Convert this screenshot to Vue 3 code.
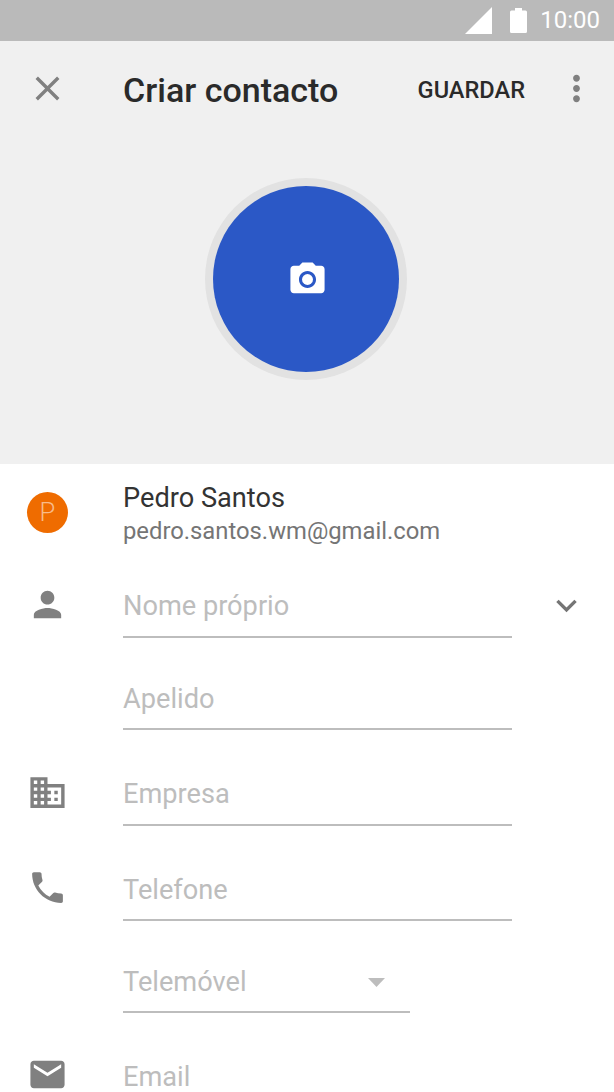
<script setup>
const rows = [
  { id: 'first', label: 'Nome próprio', h: 78, icon: 'M12 12c2.21 0 4-1.79 4-4s-1.79-4-4-4-4 1.79-4 4 1.79 4 4 4zm0 2c-2.67 0-8 1.34-8 4v2h16v-2c0-2.66-5.33-4-8-4z', chevron: true },
  { id: 'last', label: 'Apelido', h: 92 },
  { id: 'org', label: 'Empresa', h: 96, icon: 'M12 7V3H2v18h20V7H12zM6 19H4v-2h2v2zm0-4H4v-2h2v2zm0-4H4V9h2v2zm0-4H4V5h2v2zm4 12H8v-2h2v2zm0-4H8v-2h2v2zm0-4H8V9h2v2zm0-4H8V5h2v2zm10 12h-8v-2h2v-2h-2v-2h2v-2h-2V9h8v10zm-2-8h-2v2h2v-2zm0 4h-2v2h2v-2z' },
  { id: 'phone', label: 'Telefone', h: 95, icon: 'M6.62 10.79c1.44 2.83 3.76 5.14 6.59 6.59l2.2-2.2c.27-.27.67-.36 1.02-.24 1.12.37 2.33.57 3.57.57.55 0 1 .45 1 1V20c0 .55-.45 1-1 1-9.39 0-17-7.61-17-17 0-.55.45-1 1-1h3.5c.55 0 1 .45 1 1 0 1.25.2 2.45.57 3.57.11.35.03.74-.25 1.02l-2.2 2.2z' },
  { id: 'type', label: 'Telemóvel', h: 92, select: true },
  { id: 'email', label: 'Email', h: 95, icon: 'M20 4H4c-1.1 0-1.99.9-1.99 2L2 18c0 1.1.9 2 2 2h16c1.1 0 2-.9 2-2V6c0-1.1-.9-2-2-2zm0 4l-8 5-8-5V6l8 5 8-5v2z' }
]
</script>

<template>
  <div class="screen">
    <div class="status">
      <svg class="signal" width="27" height="27" viewBox="0 0 27 27"><path d="M27 0V27H0z" fill="#fff" /></svg>
      <svg class="battery" width="17" height="25" viewBox="0 0 17 25"><path d="M5 0h7v2.500h3.500q1.500 0 1.500 1.500v19.500q0 1.500-1.500 1.500h-14q-1.500 0-1.500-1.500V4q0-1.500 1.500-1.500H5z" fill="#fff" /></svg>
      <span class="clock">10:00</span>
    </div>

    <header class="top">
      <div class="toolbar">
        <svg class="icon close" viewBox="0 0 24 24"><path d="M19 6.410L17.590 5 12 10.590 6.410 5 5 6.410 10.590 12 5 17.590 6.410 19 12 13.410 17.590 19 19 17.590 13.410 12z" /></svg>
        <h1 class="title">Criar contacto</h1>
        <span class="save">GUARDAR</span>
        <svg class="icon more" viewBox="0 0 24 24"><path d="M12 8c1.100 0 2-.9 2-2s-.9-2-2-2-2 .9-2 2 .9 2 2 2zm0 2c-1.100 0-2 .9-2 2s.9 2 2 2 2-.9 2-2-.9-2-2-2zm0 6c-1.100 0-2 .9-2 2s.9 2 2 2 2-.9 2-2-.9-2-2-2z" /></svg>
      </div>
      <div class="photo-wrap">
        <div class="photo">
          <svg class="camera" viewBox="0 0 24 24"><path fill="#fff" d="M9 2L7.170 4H4c-1.100 0-2 .9-2 2v12c0 1.100.9 2 2 2h16c1.100 0 2-.9 2-2V6c0-1.100-.9-2-2-2h-3.170L15 2H9zm3 15c-2.760 0-5-2.240-5-5s2.240-5 5-5 5 2.240 5 5-2.240 5-5 5z" /><circle cx="12" cy="12" r="3.200" fill="#fff" /></svg>
        </div>
      </div>
    </header>

    <section class="account">
      <div class="badge">P</div>
      <div class="who">
        <div class="name">Pedro Santos</div>
        <div class="mail">pedro.santos.wm@gmail.com</div>
      </div>
    </section>

    <div v-for="r in rows" :key="r.id" class="row" :class="r.id" :style="{ height: r.h + 'px' }">
      <svg v-if="r.icon" class="icon lead" viewBox="0 0 24 24"><path :d="r.icon" /></svg>
      <div class="field" :class="{ short: r.select }">
        <span class="ph">{{ r.label }}</span>
        <svg v-if="r.select" class="tri" width="17" height="9" viewBox="0 0 17 9"><path d="M0 0h17L8.500 9z" /></svg>
      </div>
      <svg v-if="r.chevron" class="icon chev" viewBox="0 0 24 24"><path d="M16.590 8.590L12 13.170 7.410 8.590 6 10l6 6 6-6z" /></svg>
    </div>
  </div>
</template>

<style>
html, body { margin: 0; background: #fff; overflow: hidden; }
</style>

<style scoped>
.screen {
  width: 614px;
  height: 1092px;
  overflow: hidden;
  background: #fff;
  font-family: Roboto, "Liberation Sans", sans-serif;
}
.status {
  height: 41px;
  background: #bababa;
  display: flex;
  align-items: center;
  justify-content: flex-end;
  padding-right: 14px;
  box-sizing: border-box;
}
.signal { margin-right: 18px; }
.battery { margin-right: 13px; }
.clock { color: #fff; font-size: 24px; line-height: 41px; }
.top { height: 423px; background: #f0f0f0; }
.toolbar {
  height: 96px;
  display: flex;
  align-items: center;
}
.icon { width: 41px; height: 41px; fill: #808080; flex: none; display: block; }
.close { margin-left: 27px; margin-top: -2px; }
.title {
  margin: 2px 0 0 55px;
  font-size: 34px;
  font-weight: 500;
  color: #2a2a2a;
  line-height: 96px;
}
.save {
  margin: 2px 0 0 auto;
  font-size: 23.6px;
  font-weight: 500;
  color: #2a2a2a;
}
.more { margin: -2px 17px 0 31px; }
.photo-wrap { display: flex; justify-content: center; padding: 49px 2px 0 0; }
.photo {
  width: 186px;
  height: 186px;
  border-radius: 50%;
  background: #2b58c6;
  box-shadow: 0 0 0 8px #e2e2e2;
  display: flex;
  align-items: center;
  justify-content: center;
}
.camera { width: 41px; height: 41px; display: block; margin-left: 2px; }
.account {
  height: 96px;
  display: flex;
  align-items: center;
}
.badge {
  width: 41px;
  height: 41px;
  margin-left: 27px;
  border-radius: 50%;
  background: #ef6c00;
  color: #f8bb8a;
  font-size: 25.6px;
  font-weight: 300;
  line-height: 41px;
  text-align: center;
  flex: none;
}
.who { margin: 4px 0 0 55px; }
.name { font-size: 27.2px; line-height: 34px; color: #333; }
.mail { font-size: 23.8px; line-height: 33px; color: #757575; }
.row { position: relative; }
.field {
  position: absolute;
  left: 123px;
  bottom: 0;
  width: 389px;
  height: 60px;
  border-bottom: 2px solid #bdbdbd;
  box-sizing: border-box;
  display: flex;
  align-items: center;
  justify-content: space-between;
}
.field.short { width: 287px; }
.ph { font-size: 27.2px; color: #bdbdbd; }
.first .ph, .org .ph { margin-bottom: 2px; }
.tri { fill: #bdbdbd; margin-right: 25px; }
.lead { position: absolute; left: 27px; bottom: 13px; }
.chev { position: absolute; left: 546px; bottom: 12px; fill: #757575; }
</style>
